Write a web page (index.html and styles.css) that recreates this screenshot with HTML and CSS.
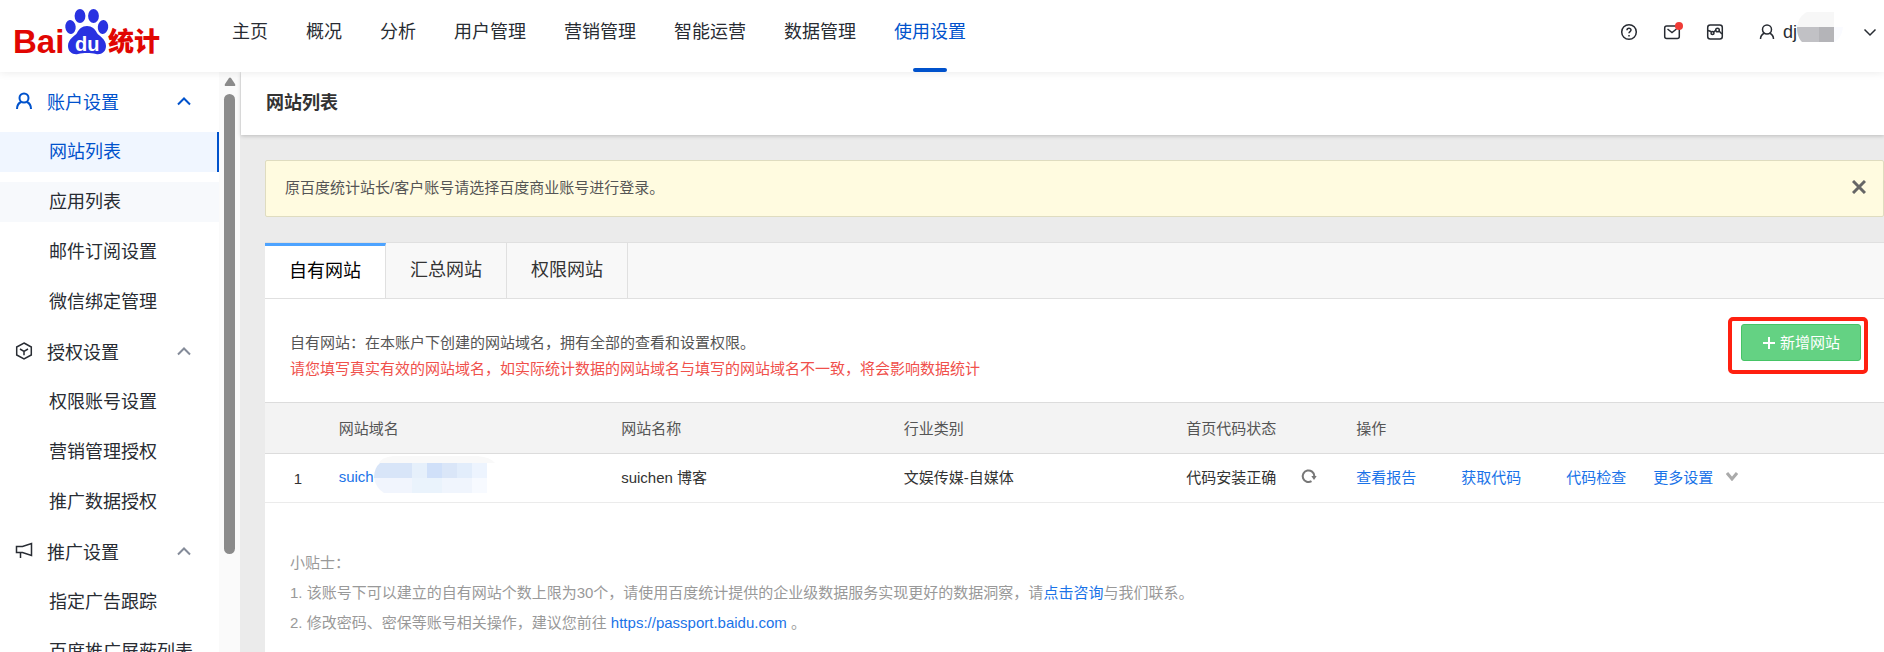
FILE: index.html
```html
<!DOCTYPE html>
<html lang="zh-CN">
<head>
    <meta charset="UTF-8">
    <meta name="viewport" content="width=device-width, initial-scale=1.0">
    <title>百度统计 - 网站列表</title>
    <link rel="stylesheet" href="styles.css">
</head>
<body>
    <!-- 顶部导航 -->
    <header class="header">
        <a class="logo" href="#" aria-label="百度统计">
            <svg width="160" height="72" viewBox="0 0 160 72">
                <text class="logo-en" x="13" y="53">Bai</text>
                <g fill="#2932e1">
                    <ellipse cx="80" cy="16" rx="5.4" ry="7"/>
                    <ellipse cx="93.500" cy="16" rx="5.400" ry="7"/>
                    <ellipse cx="70.500" cy="27" rx="5.200" ry="7" transform="rotate(-6 70.500 27)"/>
                    <ellipse cx="103" cy="27" rx="5.200" ry="7" transform="rotate(6 103 27)"/>
                    <path d="M87 26c-5 0-8 3-10 7-2 3-9 6-9 13 0 6 5 9 10 8 3-1 6-1 9-1s6 0 9 1c5 1 10-2 10-8 0-7-7-10-9-13-2-4-5-7-10-7z"/>
                </g>
                <text class="logo-du" x="75" y="51">du</text>
                <text class="logo-cn" x="108" y="51">统计</text>
            </svg>
        </a>
        <nav class="nav">
            <a href="#">主页</a>
            <a href="#">概况</a>
            <a href="#">分析</a>
            <a href="#">用户管理</a>
            <a href="#">营销管理</a>
            <a href="#">智能运营</a>
            <a href="#">数据管理</a>
            <a href="#" class="active">使用设置</a>
        </nav>
        <div class="tools">
            <button class="icon-btn" aria-label="帮助">
                <svg width="18" height="18" viewBox="0 0 18 18" class="line">
                    <circle cx="9" cy="9" r="7.300"/>
                    <path d="M7 7.300c0-2.700 4-2.600 4-.2 0 1.500-2 1.500-2 3.200M9 12v1.400"/>
                </svg>
            </button>
            <button class="icon-btn" aria-label="消息">
                <svg width="18" height="18" viewBox="0 0 18 18" class="line">
                    <rect x="1.700" y="3" width="14.600" height="12.500" rx="2"/>
                    <path d="M4.500 6l4.500 3.500L13.500 6"/>
                </svg>
                <span class="dot"></span>
            </button>
            <button class="icon-btn" aria-label="报告">
                <svg width="18" height="18" viewBox="0 0 18 18" class="line">
                    <rect x="1.700" y="2" width="14.600" height="14" rx="2.500"/>
                    <path d="M2 7.500l3 1M7 9.500l3-2.500M13 8l3 3"/>
                    <circle cx="6.500" cy="10" r="1.500"/>
                    <circle cx="11.500" cy="7" r="1.800"/>
                </svg>
            </button>
            <button class="user">
                <svg width="16" height="18" viewBox="0 0 16 18" class="line">
                    <circle cx="8" cy="6.500" r="4.500"/>
                    <path d="M1.500 16c0-3 2-5 4-6M14.500 16c0-3-2-5-4-6"/>
                </svg>
                <span class="user-name">dj</span>
                <svg class="user-mask" width="46" height="34" viewBox="0 0 46 34">
                    <path fill="#f7f7f7" d="M10 0h27v15H0C1 8 4 3 10 0z"/>
                    <path fill="#c1c1c5" d="M0 15h22v15H5C1 26 0 21 0 15z"/>
                    <path fill="#b4b4b8" d="M22 15h15v15H22z"/>
                    <path fill="#fafbff" d="M37 15h9c-1 8-4 13-9 15z"/>
                </svg>
                <svg class="line" width="14" height="18" viewBox="0 0 14 18">
                    <path d="M1.500 6.500L7 12l5.500-5.500"/>
                </svg>
            </button>
        </div>
    </header>

    <div class="layout">
        <!-- 左侧菜单 -->
        <aside class="sidebar">
            <div class="menu">
                <button class="group active">
                    <svg width="18" height="18" viewBox="0 0 18 18" class="line">
                        <circle cx="9" cy="6" r="4.500"/>
                        <path d="M2 17c0-4 2-6 4-7M16 17c0-4-2-6-4-7"/>
                    </svg>
                    <span>账户设置</span>
                    <svg class="arrow" width="14" height="10" viewBox="0 0 14 10"><path d="M1 8.500L7 2.500l6 6"/></svg>
                </button>
                <a class="item active" href="#">网站列表</a>
                <a class="item hover" href="#">应用列表</a>
                <a class="item" href="#">邮件订阅设置</a>
                <a class="item" href="#">微信绑定管理</a>
                <button class="group">
                    <svg width="18" height="18" viewBox="0 0 18 18" class="line">
                        <path d="M9 1l7.300 4v8L9 17l-7.300-4V5zM5 7l4 2.300L13 7M9 9.300v4"/>
                    </svg>
                    <span>授权设置</span>
                    <svg class="arrow" width="14" height="10" viewBox="0 0 14 10"><path d="M1 8.500L7 2.500l6 6"/></svg>
                </button>
                <a class="item" href="#">权限账号设置</a>
                <a class="item" href="#">营销管理授权</a>
                <a class="item" href="#">推广数据授权</a>
                <button class="group">
                    <svg width="18" height="18" viewBox="0 0 18 18" class="line">
                        <path d="M1.500 4.500h6l9-3v12l-9-3h-6zM5.500 10.500V16"/>
                    </svg>
                    <span>推广设置</span>
                    <svg class="arrow" width="14" height="10" viewBox="0 0 14 10"><path d="M1 8.500L7 2.500l6 6"/></svg>
                </button>
                <a class="item" href="#">指定广告跟踪</a>
                <a class="item" href="#">百度推广屏蔽列表</a>
            </div>
            <div class="scrollbar">
                <svg width="12" height="9" viewBox="0 0 12 9"><path fill="#8b8b8b" d="M5 1q1-1 2 0l4 6q1 2-1 2H2Q0 9 1 7z"/></svg>
                <div class="thumb"></div>
            </div>
        </aside>

        <!-- 右侧内容 -->
        <main class="main">
            <h1 class="page-title">网站列表</h1>
            <div class="content">
                <div class="notice">
                    <span>原百度统计站长/客户账号请选择百度商业账号进行登录。</span>
                    <button class="close" aria-label="关闭">
                        <svg width="14" height="14" viewBox="0 0 14 14"><path d="M1 1l12 12M13 1L1 13"/></svg>
                    </button>
                </div>

                <div class="panel">
                    <div class="tabs">
                        <button class="tab active">自有网站</button>
                        <button class="tab">汇总网站</button>
                        <button class="tab">权限网站</button>
                    </div>

                    <div class="intro">
                        <div>
                            <p>自有网站：在本账户下创建的网站域名，拥有全部的查看和设置权限。</p>
                            <p class="warn">请您填写真实有效的网站域名，如实际统计数据的网站域名与填写的网站域名不一致，将会影响数据统计</p>
                        </div>
                        <div class="mark">
                            <button class="add">
                                <svg width="14" height="14" viewBox="0 0 14 14"><path d="M7 1v12M1 7h12"/></svg>
                                新增网站
                            </button>
                        </div>
                    </div>

                    <table class="sites">
                        <colgroup>
                            <col class="c-no">
                            <col class="c-text">
                            <col class="c-text">
                            <col class="c-text">
                            <col class="c-status">
                            <col>
                        </colgroup>
                        <thead>
                            <tr>
                                <th></th>
                                <th>网站域名</th>
                                <th>网站名称</th>
                                <th>行业类别</th>
                                <th>首页代码状态</th>
                                <th>操作</th>
                            </tr>
                        </thead>
                        <tbody>
                            <tr>
                                <td class="no">1</td>
                                <td>
                                    <div class="domain">
                                        <a href="#">suich</a>
                                        <svg width="122" height="40" viewBox="0 0 122 40">
                                            <path fill="#f9f9f9" d="M5 7C8 2 14 0 22 0h78c10 0 16 2 21 7z"/>
                                            <path fill="#d8e5f8" d="M0 22Q0 12 6 7h32v15z"/>
                                            <path fill="#e6f0fb" d="M38 7h15v15H38z"/>
                                            <path fill="#d0e0f9" d="M53 7h15v15H53z"/>
                                            <path fill="#dae6f8" d="M68 7h15v15H68z"/>
                                            <path fill="#e2edfb" d="M83 7h15v15H83z"/>
                                            <path fill="#edf4fe" d="M98 7h15v15H98z"/>
                                            <path fill="#f1f5fd" d="M0 22h38v15H10Q2 32 0 22z"/>
                                            <path fill="#eaf3fc" d="M38 22h30v15H38z"/>
                                            <path fill="#f0f5fd" d="M68 22h30v15H68z"/>
                                            <path fill="#f7faff" d="M98 22h15v15H98z"/>
                                        </svg>
                                    </div>
                                </td>
                                <td>suichen 博客</td>
                                <td>文娱传媒-自媒体</td>
                                <td>
                                    <div class="status">
                                        代码安装正确
                                        <button class="refresh" aria-label="重新检查">
                                            <svg width="16" height="16" viewBox="0 0 16 16"><path class="ring" d="M10.500 13.200A5.800 5.800 0 1 1 13.300 8"/><path class="tip" d="M10.300 8h5.400L13 12z"/></svg>
                                        </button>
                                    </div>
                                </td>
                                <td>
                                    <div class="actions">
                                        <a href="#">查看报告</a>
                                        <a href="#">获取代码</a>
                                        <a href="#">代码检查</a>
                                        <a href="#" class="more">更多设置
                                            <svg width="12" height="10" viewBox="0 0 12 10"><path d="M1 2l5 6 5-6"/></svg>
                                        </a>
                                    </div>
                                </td>
                            </tr>
                        </tbody>
                    </table>

                    <div class="tips">
                        <p>小贴士：</p>
                        <p>1. 该账号下可以建立的自有网站个数上限为30个，请使用百度统计提供的企业级数据服务实现更好的数据洞察，请<a href="#">点击咨询</a>与我们联系。</p>
                        <p>2. 修改密码、密保等账号相关操作，建议您前往 <a href="#">https://passport.baidu.com</a> 。</p>
                    </div>
                </div>
            </div>
        </main>
    </div>
</body>
</html>
```
FILE: styles.css
```css
* {
    box-sizing: border-box;
}

body {
    margin: 0;
    height: 100vh;
    overflow: hidden;
    display: flex;
    flex-direction: column;
    font-family: "Liberation Sans", "Noto Sans CJK SC", sans-serif;
    font-size: 15px;
    color: #333;
    background: #fff;
}

button {
    padding: 0;
    border: 0;
    background: none;
    font: inherit;
    color: inherit;
    cursor: pointer;
}

a {
    color: #1a73e8;
    text-decoration: none;
}

p {
    margin: 0;
}

svg {
    display: block;
    flex: none;
}

.line {
    fill: none;
    stroke: currentColor;
    stroke-width: 1.5;
}

/* 顶部导航 */
.header {
    position: relative;
    z-index: 2;
    flex: none;
    display: flex;
    height: 72px;
    padding-right: 7px;
    background: #fff;
    box-shadow: 0 1px 8px rgba(0, 0, 0, 0.08);
}

.logo-en,
.logo-cn {
    fill: #e10602;
    font-weight: bold;
    font-size: 33px;
}

.logo-cn {
    font-size: 26px;
    font-weight: 900;
}

.logo-du {
    fill: #fff;
    font-size: 20px;
    font-weight: bold;
}

.nav {
    display: flex;
    gap: 38px;
    margin-left: 72px;
    font-size: 18px;
    line-height: 64px;
}

.nav a {
    position: relative;
    color: #282c33;
    white-space: nowrap;
}

.nav a.active {
    color: #0052cc;
}

/* 当前栏目下划线 */
.nav a.active::after {
    content: "";
    position: absolute;
    left: 50%;
    bottom: 0;
    width: 34px;
    height: 4px;
    margin-left: -17px;
    border-radius: 2px;
    background: #0052cc;
}

.tools {
    display: flex;
    align-items: center;
    height: 64px;
    margin-left: auto;
    color: #282c33;
}

.icon-btn {
    position: relative;
    margin-right: 25px;
}

.dot {
    position: absolute;
    top: -1px;
    right: -2px;
    width: 8px;
    height: 8px;
    border-radius: 50%;
    background: #ef3b36;
}

.user {
    display: flex;
    align-items: center;
    margin-left: 10px;
    font-size: 18px;
}

.user-name {
    margin-left: 8px;
}

.user-mask {
    margin-right: 20px;
    margin-bottom: 6px;
}

.layout {
    flex: 1;
    display: flex;
    min-height: 0;
}

/* 左侧菜单 */
.sidebar {
    flex: none;
    display: flex;
    width: 241px;
    border-right: 1px solid #ebebeb;
}

.menu {
    flex: 1;
    display: flex;
    flex-direction: column;
    gap: 10px;
    padding-top: 10px;
    overflow: hidden;
    font-size: 18px;
    color: #282c33;
}

.group {
    flex: none;
    display: flex;
    align-items: center;
    height: 40px;
    padding: 0 28px 2px 15px;
}

.group span {
    margin-left: 14px;
}

.group.active {
    color: #0052cc;
}

.group.active .line {
    stroke-width: 2;
}

.arrow {
    margin-left: auto;
    fill: none;
    stroke: #848b99;
    stroke-width: 2;
}

.group.active .arrow {
    stroke: #0052cc;
}

.item {
    flex: none;
    padding-left: 49px;
    line-height: 40px;
    color: #282c33;
    white-space: nowrap;
}

.item.active {
    color: #0052cc;
    background: #f0f6ff;
    border-right: 2px solid #0052cc;
}

.item.hover {
    background: #f7f9fc;
}

.scrollbar {
    display: flex;
    flex-direction: column;
    align-items: center;
    gap: 8px;
    width: 21px;
    padding-top: 5px;
    background: #fafafa;
}

.thumb {
    width: 11px;
    height: 80%;
    border-radius: 6px;
    background: #8b8b8b;
}

/* 右侧内容 */
.main {
    flex: 1;
    display: flex;
    flex-direction: column;
    min-width: 0;
    background: #ebebeb;
}

.page-title {
    flex: none;
    margin: 0;
    padding-left: 25px;
    font-size: 18px;
    line-height: 63px;
    background: #fff;
    box-shadow: 0 1px 4px rgba(0, 0, 0, 0.2);
}

.content {
    flex: 1;
    display: flex;
    flex-direction: column;
    gap: 25px;
    min-height: 0;
    padding: 25px 0 0 24px;
}

.notice {
    flex: none;
    display: flex;
    align-items: center;
    justify-content: space-between;
    height: 57px;
    padding: 0 17px 4px 19px;
    border: 1px solid #dfdcc0;
    border-radius: 2px;
    background: #fffbe0;
    color: #555;
}

.close svg {
    stroke: #666;
    stroke-width: 3;
}

.panel {
    flex: 1;
    min-height: 0;
    background: #fff;
}

.tabs {
    display: flex;
    height: 57px;
    border-top: 1px solid #e0e0e0;
    border-bottom: 1px solid #e0e0e0;
    background: #f8f8f8;
}

.tab {
    width: 121px;
    padding-bottom: 6px;
    border-right: 1px solid #e0e0e0;
    font-size: 18px;
}

.tab.active {
    margin-bottom: -1px;
    border-top: 3px solid #4da3ff;
    background: #fff;
    color: #000;
    border-bottom: 1px solid #e0e0e0;
}

.intro {
    display: flex;
    justify-content: space-between;
    padding: 18px 16px 20px 25px;
    line-height: 26px;
    color: #555;
}

.intro p:first-child {
    margin-top: 13px;
}

.intro .warn {
    color: #f0504b;
}

.mark {
    flex: none;
    width: 140px;
    height: 57px;
    padding: 3px 3px 0 9px;
    border: 4px solid #ff2010;
    border-radius: 5px;
}

.add {
    display: flex;
    align-items: center;
    justify-content: center;
    gap: 4px;
    width: 120px;
    height: 37px;
    border: 1px solid #46c466;
    border-radius: 3px;
    background: #64d283;
    color: #fff;
}

.add svg {
    stroke: #fff;
    stroke-width: 2;
}

/* 网站表格 */
.sites {
    width: 100%;
    table-layout: fixed;
    border-collapse: collapse;
    text-align: left;
}

.c-no {
    width: 4.55%;
}

.c-text {
    width: 17.45%;
}

.c-status {
    width: 10.5%;
}

.sites th {
    height: 51px;
    padding: 0 0 2px;
    border-top: 1px solid #dcdcdc;
    border-bottom: 1px solid #dcdcdc;
    background: #f3f3f3;
    color: #555;
    font-weight: normal;
}

.sites td {
    height: 49px;
    padding: 0 0 4px;
    border-bottom: 1px solid #ebebeb;
    white-space: nowrap;
}

.sites td.no {
    padding: 0 8px 0 0;
    text-align: center;
}

.domain {
    display: flex;
    align-items: center;
    height: 40px;
}

.status,
.actions,
.more {
    display: flex;
    align-items: center;
}

.status {
    gap: 25px;
}

.refresh .ring {
    fill: none;
    stroke: #777;
    stroke-width: 2;
}

.refresh .tip {
    fill: #777;
}

.actions {
    gap: 45px;
}

.more {
    gap: 13px;
    margin-left: -18px;
}

.more svg {
    fill: none;
    stroke: #aaa;
    stroke-width: 3;
}

.tips {
    padding: 45px 25px;
    line-height: 30px;
    color: #999;
}
```
